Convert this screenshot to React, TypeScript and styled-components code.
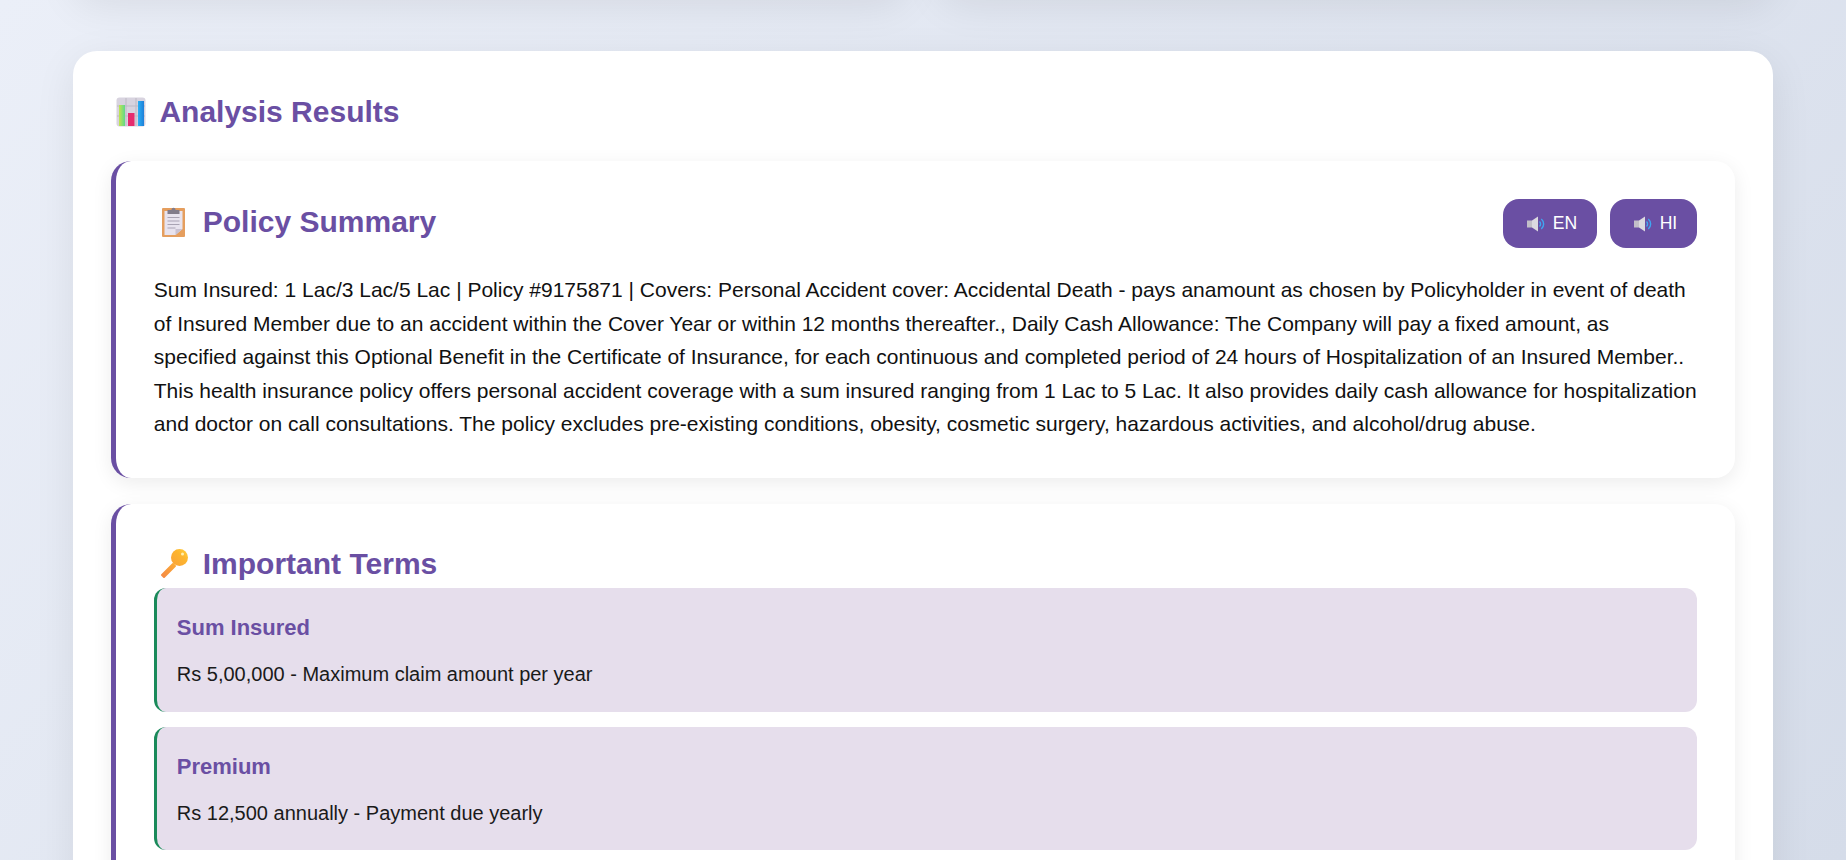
import { FC } from 'react';
import styled, { createGlobalStyle } from 'styled-components';

const GlobalStyle = createGlobalStyle`
  html, body {
    margin: 0;
    padding: 0;
    height: 860px;
    overflow: hidden;
  }

  body {
    font-family: 'Liberation Sans', Arial, sans-serif;
    line-height: 1.6;
    color: #111;
    background: linear-gradient(135deg, #ebeff8 0%, #d5dce9 100%);
  }
`;

const ChartIcon: FC = () => (
  <svg width="30" height="30" viewBox="0 0 30 30">
    <defs>
      <linearGradient id="barGreen" x1="0" x2="1" y1="0" y2="0">
        <stop offset="0" stopColor="#c4e54f" />
        <stop offset="1" stopColor="#5fd88a" />
      </linearGradient>
      <linearGradient id="barBlue" x1="0" x2="1" y1="0" y2="0">
        <stop offset="0" stopColor="#2ab0f5" />
        <stop offset="1" stopColor="#1f7fd8" />
      </linearGradient>
    </defs>
    <rect x="0.5" y="0.5" width="29" height="29" rx="3" fill="#d8d3df" />
    <path d="M10 1v28M20 1v28M1 9h28M1 19h28" stroke="#bdb9c4" strokeWidth="1" />
    <rect x="3" y="8" width="6" height="21" fill="url(#barGreen)" />
    <rect x="12" y="16" width="6.5" height="13" fill="#e52c6e" />
    <rect x="22" y="4" width="6" height="25" fill="url(#barBlue)" />
  </svg>
);

const ClipboardIcon: FC = () => (
  <svg width="31" height="30" viewBox="0 0 31 30">
    <g transform="translate(3.5 0)">
      <rect x="0.5" y="1" width="23" height="29" rx="1" fill="#e59e5e" />
      <path d="M3 4h18v18l-7 6H3z" fill="#e8e3ee" />
      <path d="M21 22l-7 6v-6z" fill="#c9c2d2" />
      <path d="M6 10.5h12M6 14h12M6 17.5h12M6 21h8" stroke="#a9a3b3" strokeWidth="1.2" />
      <path d="M6 3h4c0-3 4-3 4 0h4v4H6z" fill="#827c8a" />
    </g>
  </svg>
);

const KeyIcon: FC = () => (
  <svg width="31" height="30" viewBox="0 0 31 30">
    <defs>
      <linearGradient id="keyFill" x1="0" x2="1" y1="1" y2="0">
        <stop offset="0" stopColor="#f9a23a" />
        <stop offset="0.6" stopColor="#fdb52e" />
        <stop offset="1" stopColor="#ffd23c" />
      </linearGradient>
      <linearGradient id="keyStem" x1="0" x2="1" y1="1" y2="0">
        <stop offset="0" stopColor="#f58a45" />
        <stop offset="1" stopColor="#fbab36" />
      </linearGradient>
    </defs>
    <path d="M4 26L15 15l2 2L6 28z" fill="url(#keyStem)" stroke="url(#keyStem)" strokeWidth="2" strokeLinejoin="round" />
    <circle cx="21.5" cy="8.5" r="8.5" fill="url(#keyFill)" />
    <circle cx="24.5" cy="5" r="1.5" fill="#fff1b0" />
  </svg>
);

const SpeakerIcon: FC = () => (
  <svg width="18" height="16" viewBox="0 0 18 16">
    <rect x="0" y="4.5" width="5" height="7" fill="#c2bfc8" />
    <path d="M5 4.5L11 0.5v15L5 11.5z" fill="#dcdae0" />
    <path d="M12.5 5.5a3.5 3.5 0 0 1 0 5" stroke="#3fa6f2" strokeWidth="1.4" fill="none" />
    <path d="M14.3 3a6.5 6.5 0 0 1 0 10" stroke="#3fa6f2" strokeWidth="1.4" fill="none" />
  </svg>
);

const TERMS = [
  { title: 'Sum Insured', text: 'Rs 5,00,000 - Maximum claim amount per year' },
  { title: 'Premium', text: 'Rs 12,500 annually - Payment due yearly' },
];

const App: FC = () => (
  <>
    <GlobalStyle />
    <Page>
      <TopRow>
        <TopCard />
        <TopCard />
      </TopRow>
      <Results>
        <ResultsTitle>
          <ChartIcon />
          Analysis Results
        </ResultsTitle>
        <Section>
          <SectionHeader>
            <SectionTitle>
              <ClipboardIcon />
              Policy Summary
            </SectionTitle>
            <Voices>
              <VoiceButton>
                <SpeakerIcon />
                EN
              </VoiceButton>
              <VoiceButton>
                <SpeakerIcon />
                HI
              </VoiceButton>
            </Voices>
          </SectionHeader>
          <Summary>
            Sum Insured: 1 Lac/3 Lac/5 Lac | Policy #9175871 | Covers: Personal Accident cover: Accidental Death - pays
            anamount as chosen by Policyholder in event of death of Insured Member due to an accident within the Cover
            Year or within 12 months thereafter., Daily Cash Allowance: The Company will pay a fixed amount, as specified
            against this Optional Benefit in the Certificate of Insurance, for each continuous and completed period of 24
            hours of Hospitalization of an Insured Member.. This health insurance policy offers personal accident
            coverage with a sum insured ranging from 1 Lac to 5 Lac. It also provides daily cash allowance for
            hospitalization and doctor on call consultations. The policy excludes pre-existing conditions, obesity,
            cosmetic surgery, hazardous activities, and alcohol/drug abuse.
          </Summary>
        </Section>
        <Section>
          <SectionTitle>
            <KeyIcon />
            Important Terms
          </SectionTitle>
          <TermList>
            {TERMS.map((term) => (
              <Term key={term.title}>
                <TermTitle>{term.title}</TermTitle>
                <TermText>{term.text}</TermText>
              </Term>
            ))}
          </TermList>
        </Section>
      </Results>
    </Page>
  </>
);

export default App;

const Page = styled.div`
  max-width: 1700px;
  height: 860px;
  margin: 0 auto;
`;

const TopRow = styled.div`
  display: grid;
  grid-template-columns: 1fr 1fr;
  gap: 32px;

  height: 100px;
  margin-top: -104px;
  margin-bottom: 55px;
`;

const TopCard = styled.div`
  background: #fff;
  border-radius: 24px;
  box-shadow: 0 10px 40px rgba(0, 0, 0, 0.08);
`;

const Results = styled.main`
  padding: 38.4px;

  background: #fff;
  border-radius: 24px;
  box-shadow: 0 10px 40px rgba(0, 0, 0, 0.08);
`;

const ResultsTitle = styled.h2`
  display: flex;
  align-items: center;
  gap: 13px;

  margin: 0 0 25.6px;
  padding-left: 5px;

  color: #6a4fa3;
  font-size: 30px;
  font-weight: 700;
  line-height: 46px;
`;

const Section = styled.section`
  margin-bottom: 25.6px;
  padding: 37px 37.4px 37.6px;

  background: #fff;
  border-left: 5px solid #6a4fa3;
  border-radius: 20px;
  box-shadow: 0 5px 20px rgba(0, 0, 0, 0.08);
`;

const SectionHeader = styled.div`
  display: flex;
  align-items: flex-start;
  justify-content: space-between;

  margin-bottom: 25px;

  h3 {
    margin-top: 1px;
  }
`;

const SectionTitle = styled.h3`
  display: flex;
  align-items: center;
  gap: 14px;

  margin: 0;
  padding-left: 4px;

  color: #6a4fa3;
  font-size: 30px;
  font-weight: 700;
  line-height: 46px;
`;

const Voices = styled.div`
  display: flex;
  gap: 13px;

  margin-top: 1.4px;
`;

const VoiceButton = styled.button`
  display: flex;
  align-items: center;
  gap: 8px;

  height: 49px;
  padding: 0 20px 0 23.5px;

  color: #fff;
  font-family: inherit;
  font-size: 17.6px;

  background: #6a4fa3;
  border: none;
  border-radius: 16px;
`;

const Summary = styled.p`
  margin: 0;

  font-size: 21px;
  line-height: 33.5px;
`;

const TermList = styled.div`
  display: flex;
  flex-direction: column;
  gap: 15px;

  margin-top: 1px;
`;

const Term = styled.div`
  padding: 23.3px 20px 20.6px;

  background: #e6deec;
  border-left: 3px solid #1a8a5a;
  border-radius: 12px;
`;

const TermTitle = styled.div`
  margin-bottom: 13.7px;

  color: #6a4fa3;
  font-size: 22px;
  font-weight: 700;
  line-height: 33px;
`;

const TermText = styled.div`
  color: #1a1a1a;
  font-size: 20px;
  line-height: 33px;
`;
